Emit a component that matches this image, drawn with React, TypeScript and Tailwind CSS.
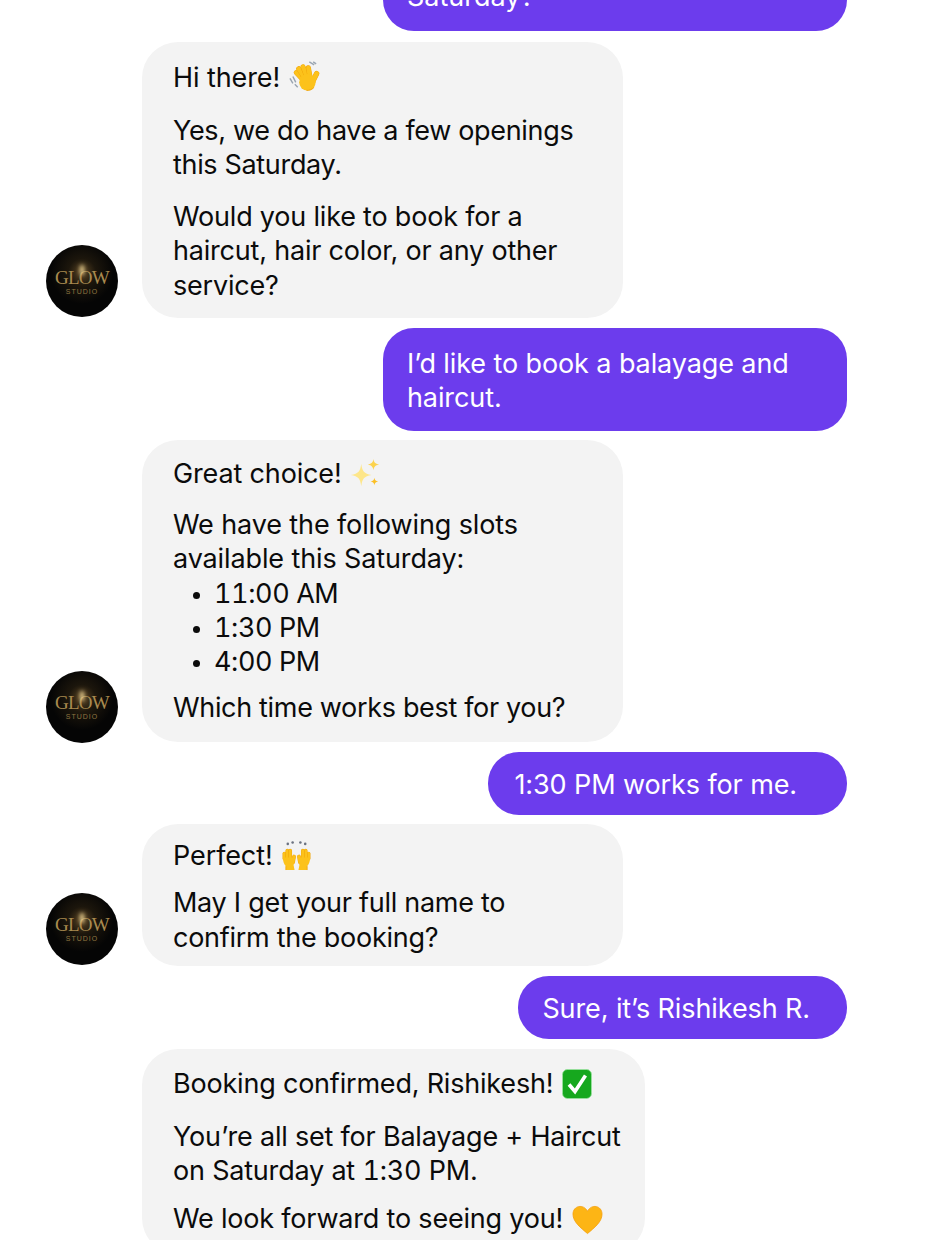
function Finger({ d, w = 4.4 }: { d: string; w?: number }) {
  return (
    <>
      <path d={d} stroke="#f0a30a" strokeWidth={w + 0.8} strokeLinecap="round" fill="none" />
      <path d={d} stroke="#fcc21b" strokeWidth={w} strokeLinecap="round" fill="none" />
    </>
  );
}

function Wave() {
  return (
    <svg viewBox="0 0 32 32" className="ml-[9px] inline-block h-[31px] w-[31px] align-[-5px]">
      <path d="M1 18l3 5M4 16l3 6M6 24l3 3" stroke="#9aa5b1" strokeWidth="1.5" fill="none" />
      <path d="M21 1l5 3M25 1l3 2" stroke="#9aa5b1" strokeWidth="1.5" fill="none" />
      <Finger d="M16 21L7.500 12" />
      <Finger d="M17 19L10 8" />
      <Finger d="M19 18L14.500 6" />
      <Finger d="M22 18L20 7" />
      <Finger d="M24 22l4.500-9" w={4.800} />
      <circle cx="19" cy="22" r="8.500" fill="#fcc21b" />
      <path d="M26 27c-2 2.500-5 3.600-8 3.300" stroke="#f0a30a" strokeWidth="1" fill="none" />
    </svg>
  );
}

function Sparkles() {
  return (
    <svg viewBox="0 0 32 32" className="ml-[8px] inline-block h-[30px] w-[30px] align-[-5px]">
      <path d="M12 6c1 8 3 10.500 11 12-8 1.500-10 4-11 12-1-8-3-10.500-11-12 8-1.500 10-4 11-12z" fill="#fde68a" />
      <path d="M25 1c.6 3.500 1.700 5 6 6-4.300 1-5.400 2.500-6 6-.6-3.500-1.700-5-6-6 4.300-1 5.400-2.500 6-6z" fill="#fcd34d" />
      <path d="M26 21c.4 2.500 1.200 3.300 4 4-2.800.7-3.600 1.500-4 4-.4-2.500-1.200-3.300-4-4 2.800-.7 3.600-1.500 4-4z" fill="#fbbf24" />
    </svg>
  );
}

function Hand() {
  return (
    <>
      <Finger d="M3.500 19v-5" w={3} />
      <Finger d="M6.500 18v-7" w={3} />
      <Finger d="M9.500 18v-7" w={3} />
      <Finger d="M12.500 23l1-6" w={3} />
      <path d="M2 18h12l-1 8 1 5H5v-4c-2-2-3-5-3-9z" fill="#fcc21b" />
      <path d="M5 31v-4" stroke="#f0a30a" strokeWidth="0.8" />
    </>
  );
}

function RaisedHands() {
  return (
    <svg viewBox="0 0 32 32" className="ml-[8px] inline-block h-[31px] w-[31px] align-[-6px]">
      <g fill="#6b7280">
        <circle cx="7" cy="4" r="1.300" />
        <circle cx="12" cy="2.500" r="1.300" />
        <circle cx="20" cy="2.500" r="1.300" />
        <circle cx="25" cy="4" r="1.300" />
      </g>
      <Hand />
      <g transform="translate(32 0) scale(-1 1)">
        <Hand />
      </g>
    </svg>
  );
}

function CheckBox() {
  return (
    <svg viewBox="0 0 30 30" className="ml-[9px] inline-block h-[30px] w-[30px] align-[-6px]">
      <rect x="0.500" y="0.500" width="29" height="29" rx="5" fill="#16a81e" stroke="#9be29f" strokeWidth="0.8" />
      <path d="M7 15.500l6 7L23.500 6.500" fill="none" stroke="#fff" strokeWidth="3.600" />
    </svg>
  );
}

function Heart() {
  return (
    <svg viewBox="0 0 32 30" className="ml-[9px] inline-block h-[30px] w-[31px] align-[-7px]">
      <path
        d="M16 29C9 23 1 17 1 9c0-9 11-11 15-3 4-8 15-6 15 3 0 8-8 14-15 20z"
        fill="#fdb515"
        stroke="#f59e0b"
        strokeWidth="0.8"
      />
    </svg>
  );
}

function Avatar({ shift }: { shift: string }) {
  return (
    <div className={`relative mr-[24px] flex h-[72px] w-[72px] shrink-0 flex-col items-center justify-center overflow-hidden rounded-full bg-[radial-gradient(circle_at_50%_38%,#5b4524_0%,#1c160c_24%,#050505_55%)] ${shift}`}>
      <div className="mt-[2px] font-['Liberation_Serif',serif] text-[19px] leading-[18px] tracking-[-0.7px] text-[#a98a4f]">
        GLOW
      </div>
      <div className="font-['Liberation_Sans',sans-serif] text-[7px] leading-[9px] tracking-[1px] text-[#8f7642]">
        STUDIO
      </div>
      <div className="absolute left-[34px] top-[20px] h-[10px] w-[4px] rounded-full bg-[#f6dc9a] blur-[2px]" />
    </div>
  );
}

function Incoming({ children, shift }: { children: React.ReactNode; shift: string }) {
  return (
    <div className="flex items-end">
      <Avatar shift={shift} />
      <div className="w-[481px] rounded-[36px] bg-[#f3f3f3] pl-[31px] pr-[20px] tracking-[-0.33px]">
        {children}
      </div>
    </div>
  );
}

export default function App() {
  return (
    <div className="h-[1240px] overflow-hidden bg-white font-['Inter',sans-serif] text-[27px] leading-[34.300px] text-[#0b0b0b]">
      <div className="-mt-[37px] flex flex-col pl-[46px] pr-[90px]">
        <div className="mb-[11px] w-[464px] self-end rounded-[31px] bg-[#6c3ced] pb-[17px] pl-[24px] pt-[17px] text-white">
          Saturday?
        </div>

        <div className="mb-[10px]">
          <Incoming shift="mb-[1px]">
            <div className="pb-[15px] pt-[19px]">
              <p className="mb-[18px] tracking-[-0.1px]">
                Hi there!
                <Wave />
              </p>
              <p className="mb-[18px]">Yes, we do have a few openings this Saturday.</p>
              <p className="tracking-[-0.2px]">Would you like to book for a haircut, hair color, or any other service?</p>
            </div>
          </Incoming>
        </div>

        <div className="mb-[9px] w-[464px] self-end rounded-[31px] bg-[#6c3ced] pb-[15.500px] pl-[24px] pr-[40px] pt-[18.500px] tracking-[-0.1px] text-white">
          I’d like to book a balayage and haircut.
        </div>

        <div className="mb-[10px]">
          <Incoming shift="-mb-[1px]">
            <div className="pb-[16px] pt-[17px]">
              <p className="mb-[17px] tracking-[-0.15px]">
                Great choice!
                <Sparkles />
              </p>
              <p className="tracking-[-0.12px]">We have the following slots available this Saturday:</p>
              <ul className="mb-[12px] list-disc pl-[41px] tabular-nums tracking-[-0.4px] marker:text-[22px]">
                <li>11:00 AM</li>
                <li>1:30 PM</li>
                <li>4:00 PM</li>
              </ul>
              <p>Which time works best for you?</p>
            </div>
          </Incoming>
        </div>

        <div className="mb-[9px] self-end rounded-[31px] bg-[#6c3ced] pb-[13px] pl-[26px] pr-[50px] pt-[16px] tracking-[-0.1px] text-white">
          1:30 PM works for me.
        </div>

        <div className="mb-[10px]">
          <Incoming shift="mb-[1px]">
            <div className="pb-[11px] pt-[15px]">
              <p className="mb-[13px] tracking-[-0.1px]">
                Perfect!
                <RaisedHands />
              </p>
              <p className="tracking-[-0.27px]">May I get your full name to confirm the booking?</p>
            </div>
          </Incoming>
        </div>

        <div className="mb-[10px] self-end rounded-[31px] bg-[#6c3ced] pb-[13px] pl-[24px] pr-[37px] pt-[16px] tracking-[-0.1px] text-white">
          Sure, it’s Rishikesh R.
        </div>

        <div className="ml-[96px] w-[503px] rounded-[36px] bg-[#f3f3f3] pb-[18px] pl-[31px] pr-[10px] pt-[18px] tracking-[-0.2px]">
          <p className="mb-[18px]">
            Booking confirmed, Rishikesh!
            <CheckBox />
          </p>
          <p className="mb-[14px]">
            You’re all set for Balayage + Haircut on Saturday at <span className="tabular-nums">1:30</span> PM.
          </p>
          <p>
            We look forward to seeing you!
            <Heart />
          </p>
        </div>
      </div>
    </div>
  );
}
